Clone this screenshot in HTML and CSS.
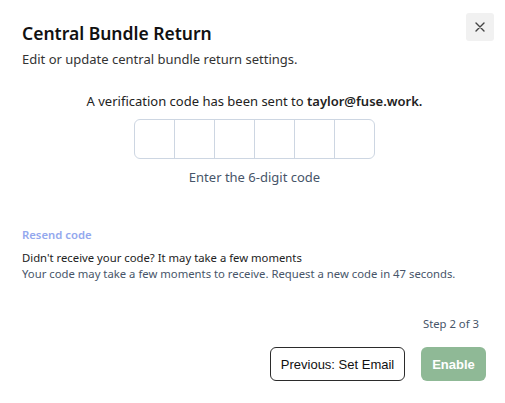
FILE: index.html
```html
<!DOCTYPE html>
<html>
<head>
<meta charset="utf-8">
<link rel="stylesheet" href="styles.css">
</head>
<body>
<div class="dialog">
  <div class="header">
    <div class="titles">
      <h1 class="title">Central Bundle Return</h1>
      <p class="subtitle">Edit or update central bundle return settings.</p>
    </div>
    <button class="close" aria-label="Close">
      <svg width="10" height="10" viewBox="0 0 10 10"><path d="M1 1L9 9M9 1L1 9" stroke="#444" stroke-width="1.4" stroke-linecap="round"/></svg>
    </button>
  </div>
  <div class="verify">
    <p class="sent">A verification code has been sent to <b>taylor@fuse.work.</b></p>
    <div class="otp">
      <span class="cell"></span><span class="cell"></span><span class="cell"></span><span class="cell"></span><span class="cell"></span><span class="cell"></span>
    </div>
    <p class="hint">Enter the 6-digit code</p>
  </div>
  <div class="resend">
    <a class="resend-link">Resend code</a>
    <p class="note">Didn't receive your code? It may take a few moments</p>
    <p class="note muted">Your code may take a few moments to receive. Request a new code in 47 seconds.</p>
  </div>
  <div class="footer">
    <p class="step">Step 2 of 3</p>
    <div class="actions">
      <button class="btn btn-outline">Previous: Set Email</button>
      <button class="btn btn-primary">Enable</button>
    </div>
  </div>
</div>
</body>
</html>
```
FILE: styles.css
```css
* { box-sizing: border-box; }
html, body { margin: 0; padding: 0; background: #fff; }
body { font-family: "Noto Sans", "Open Sans", sans-serif; color: #1f1f1f; width: 505px; height: 403px; overflow: hidden; }
.dialog { padding: 13px 11px 0 22px; }
.header { display: flex; justify-content: space-between; align-items: flex-start; }
.title { margin: 7px 0 0; font-size: 17.5px; font-weight: 600; line-height: 26px; color: #111; }
.subtitle { margin: 3px 0 0; font-size: 13px; line-height: 20px; color: #333; }
.close { width: 28px; height: 28px; border: none; border-radius: 3px; background: #f1f1f1; display: flex; align-items: center; justify-content: center; padding: 0; }
.verify { display: flex; flex-direction: column; align-items: center; margin-top: 22px; margin-right: 7px; }
.sent { margin: 0; font-size: 13px; line-height: 20px; color: #222; }
.sent b { font-weight: 600; }
.otp { display: flex; margin-top: 8px; border: 1px solid #cdd6e2; border-radius: 6px; overflow: hidden; }
.cell { width: 40px; height: 38px; border-left: 1px solid #cdd6e2; }
.cell:first-child { border-left: none; width: 39px; }
.hint { margin: 8px 0 0; font-size: 13px; line-height: 20px; color: #475569; }
.resend { margin-top: 40px; }
.resend-link { display: block; font-size: 11.3px; font-weight: 600; color: #93a8ee; line-height: 16px; }
.note { margin: 0; font-size: 11.3px; line-height: 16px; color: #222; }
.resend-link + .note { margin-top: 7px; }
.note.muted { color: #475569; }
.footer { margin-top: 34px; display: flex; flex-direction: column; align-items: flex-end; padding-right: 8px; }
.step { margin: 0 7px 0 0; font-size: 11.3px; line-height: 16px; color: #475569; }
.actions { display: flex; gap: 16px; margin-top: 15px; }
.btn { height: 34px; border-radius: 6px; font-family: "Liberation Sans", Arial, sans-serif; font-size: 13px; padding: 0; white-space: nowrap; }
.btn-outline { background: #fff; border: 1px solid #2b2b2b; color: #111; width: 135px; }
.btn-primary { background: #8fb996; border: none; color: #fff; font-weight: 700; width: 65px; }
```
